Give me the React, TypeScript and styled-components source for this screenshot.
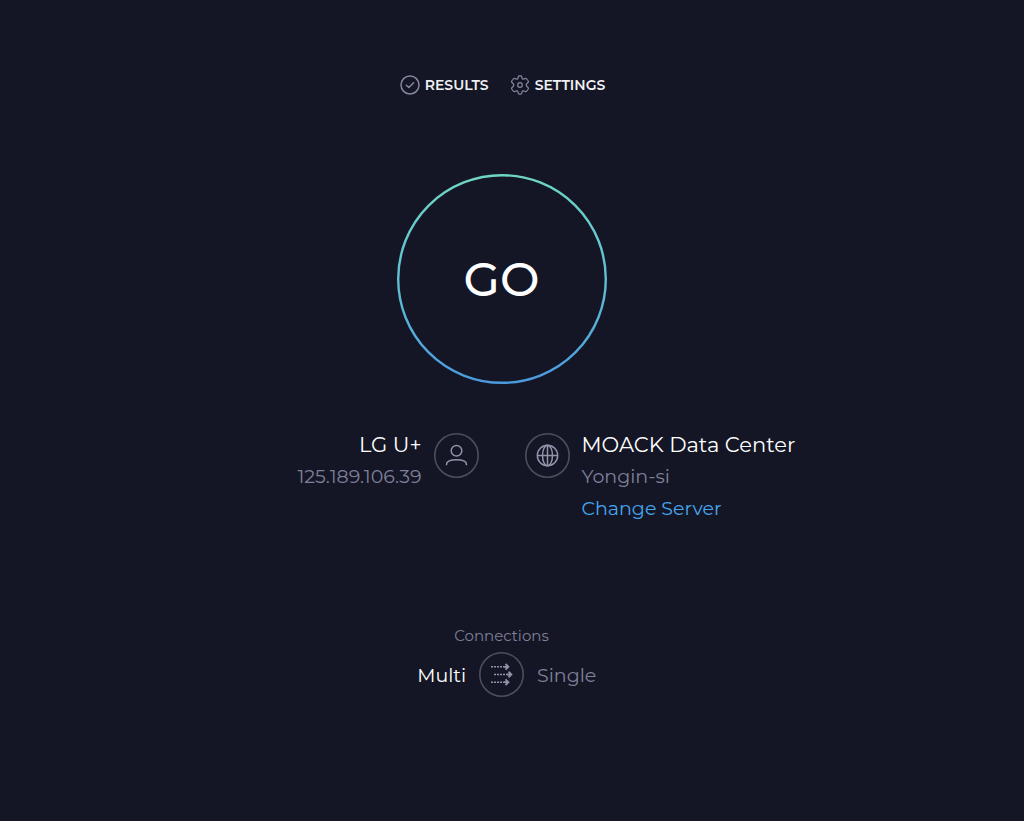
import React, { useState } from "react";
import styled, { createGlobalStyle } from "styled-components";

const GlobalStyle = createGlobalStyle`
  * { box-sizing: border-box; }
  body {
    margin: 0;
    background: #141625;
    color: #fff;
    font-family: Montserrat, Inter, "Liberation Sans", sans-serif;
  }
  button { font: inherit; color: inherit; background: none; border: 0; padding: 0; cursor: pointer; }
  svg { display: block; flex: none; }
`;

const Page = styled.main`
  display: flex;
  flex-direction: column;
  align-items: center;
  min-height: 100vh;
  padding: 73px 21px 40px 0;
`;

const Nav = styled.nav`
  display: flex;
  gap: 21px;
  padding-left: 2px;
`;

const NavLink = styled.a`
  display: flex;
  align-items: center;
  gap: 5px;
  height: 24px;
  color: #f0f0f5;
  font-size: 14px;
  font-weight: 600;
  text-decoration: none;
`;

const GoButton = styled.button`
  display: grid;
  place-items: center;
  width: 210px;
  height: 210px;
  margin-top: 77px;
  border-radius: 50%;

  > * { grid-area: 1 / 1; }
`;

const GoLabel = styled.span`
  padding-top: 2px;
  font-size: 47px;
  line-height: 56px;
  font-weight: 500;
`;

const Hosts = styled.section`
  display: grid;
  grid-template-columns: 1fr 1fr;
  gap: 46px;
  width: 100%;
  margin-top: 45px;
`;

const Host = styled.div<{ $side: "left" | "right" }>`
  display: flex;
  flex-direction: ${(p) => (p.$side === "left" ? "row-reverse" : "row")};
  align-items: flex-start;
  gap: 12px;
  text-align: ${(p) => p.$side === "left" ? "right" : "left"};
`;

const Ring = styled.span`
  flex: none;
  width: 45px;
  height: 45px;
  margin-top: 4px;
  border-radius: 50%;
  color: #9193a8;
`;

const Toggle = styled(Ring).attrs({ as: "button" })`
  margin-top: 0;
`;

const HostText = styled.div`
  display: flex;
  flex-direction: column;
`;

const HostName = styled.span`
  font-size: 21px;
  line-height: 32px;
`;

const HostDetail = styled.span`
  color: #7f8099;
  font-size: 19px;
  line-height: 32px;
`;

const ChangeLink = styled.a`
  color: #46a6f0;
  font-size: 19px;
  line-height: 32px;
  text-decoration: none;
`;

const Connections = styled.section`
  display: flex;
  flex-direction: column;
  align-items: center;
  width: 100%;
  margin-top: 101px;
`;

const Caption = styled.span`
  color: #7f8099;
  font-size: 15px;
  line-height: 20px;
`;

const Modes = styled.div`
  display: grid;
  grid-template-columns: 1fr auto 1fr;
  align-items: center;
  gap: 13px;
  width: 100%;
  margin-top: 6px;
`;

const Mode = styled.button<{ $active: boolean; $align: "start" | "end" }>`
  justify-self: ${(p) => p.$align};
  padding-top: 2px;
  color: ${(p) => (p.$active ? "#fff" : "#7f8099")};
  font-size: 19px;
  line-height: 24px;
`;

const CheckIcon = () => (
  <svg width="20" height="20" viewBox="0 0 20 20" fill="none" stroke="#86889d" strokeWidth="1.5" aria-hidden="true">
    <circle cx="10" cy="10" r="9" />
    <path d="M6.3 10.2 8.8 12.5 13.6 7.7" strokeLinecap="round" strokeLinejoin="round" />
  </svg>
);

const GearIcon = () => (
  <svg width="20" height="20" viewBox="0 0 20 20" fill="none" stroke="#86889d" strokeWidth="1.2" strokeLinejoin="round" aria-hidden="true">
    <path d="M8.2 1.9Q8.4.9 9.3.9H10.7Q11.6.9 11.8 1.9L12.1 3.3Q12.4 4.3 13.4 4.1L15.2 3.5Q16.2 3.2 16.7 4L18.3 6Q18.8 6.8 18 7.5L16.7 8.7Q15.6 10 16.7 11.3L18 12.5Q18.8 13.2 18.3 14L16.7 16Q16.2 16.8 15.2 16.5L13.4 15.9Q12.4 15.7 12.1 16.7L11.8 18.1Q11.6 19.1 10.7 19.1H9.3Q8.4 19.1 8.2 18.1L7.9 16.7Q7.6 15.7 6.6 15.9L4.8 16.5Q3.8 16.8 3.3 16L1.7 14Q1.2 13.2 2 12.5L3.3 11.3Q4.4 10 3.3 8.7L2 7.5Q1.2 6.8 1.7 6L3.3 4Q3.8 3.2 4.8 3.5L6.6 4.1Q7.6 4.3 7.9 3.3Z" />
    <circle cx="10" cy="10" r="2.3" />
  </svg>
);

const RingIcon = ({ children }: { children: React.ReactNode }) => (
  <svg width="45" height="45" viewBox="0 0 45 45" fill="none" stroke="currentColor" strokeWidth="1.5" aria-hidden="true">
    <circle cx="22.5" cy="22.5" r="21.7" stroke="#4c4e5e" strokeWidth="1.6" />
    {children}
  </svg>
);

const UserIcon = () => (
  <RingIcon>
    <circle cx="22.5" cy="17.7" r="5.3" />
    <path d="M12.5 32.3V31.5C12.5 28.3 15.7 26.7 22.5 26.7S32.5 28.3 32.5 31.5V32.3" />
  </RingIcon>
);

const GlobeIcon = () => (
  <RingIcon>
    <circle cx="22.5" cy="22.5" r="10.2" />
    <ellipse cx="22.5" cy="22.5" rx="5" ry="10.2" />
    <path d="M22.5 12.3V32.7M12.3 22.5H32.7" />
  </RingIcon>
);

const MultiIcon = () => (
  <RingIcon>
    <path d="M12 14.8H25M15 22.5H28M12 30.2H25" strokeDasharray="2 1" />
    <path d="M26.5 12 29.4 14.8 26.5 17.6M29.5 19.7 32.4 22.5 29.5 25.3M26.5 27.4 29.4 30.2 26.5 33M25 14.8H29M28 22.5H32M25 30.2H29" strokeWidth="1.8" />
  </RingIcon>
);

export default function App() {
  const [multi, setMulti] = useState(true);
  return (
    <>
      <GlobalStyle />
      <Page>
        <Nav>
          <NavLink href="#results"><CheckIcon />RESULTS</NavLink>
          <NavLink href="#settings"><GearIcon />SETTINGS</NavLink>
        </Nav>

        <GoButton type="button">
          <svg width="210" height="210" viewBox="0 0 210 210" fill="none" aria-hidden="true">
            <defs>
              <linearGradient id="ring" x1="0" y1="0" x2="0" y2="1">
                <stop offset="0" stopColor="#6ed6c3" />
                <stop offset="0.5" stopColor="#60bfd4" />
                <stop offset="1" stopColor="#4b9ade" />
              </linearGradient>
            </defs>
            <circle cx="105" cy="105" r="103.8" stroke="url(#ring)" strokeWidth="2.4" />
          </svg>
          <GoLabel>GO</GoLabel>
        </GoButton>

        <Hosts>
          <Host $side="left">
            <Ring><UserIcon /></Ring>
            <HostText>
              <HostName>LG U+</HostName>
              <HostDetail>125.189.106.39</HostDetail>
            </HostText>
          </Host>
          <Host $side="right">
            <Ring><GlobeIcon /></Ring>
            <HostText>
              <HostName>MOACK Data Center</HostName>
              <HostDetail>Yongin-si</HostDetail>
              <ChangeLink href="#servers">Change Server</ChangeLink>
            </HostText>
          </Host>
        </Hosts>

        <Connections aria-label="Connections">
          <Caption>Connections</Caption>
          <Modes>
            <Mode type="button" $align="end" $active={multi} onClick={() => setMulti(true)}>Multi</Mode>
            <Toggle aria-label="Switch connection mode" onClick={() => setMulti(!multi)}><MultiIcon /></Toggle>
            <Mode type="button" $align="start" $active={!multi} onClick={() => setMulti(false)}>Single</Mode>
          </Modes>
        </Connections>
      </Page>
    </>
  );
}
